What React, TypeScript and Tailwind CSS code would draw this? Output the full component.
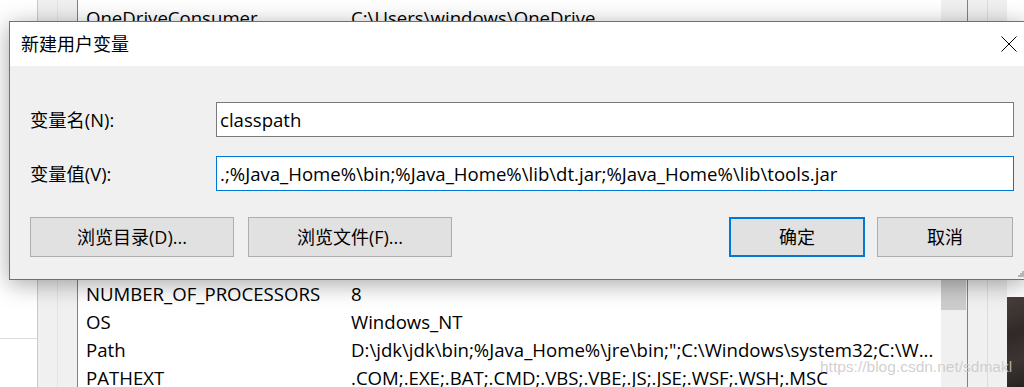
import React from 'react';

const ui = "font-['Open_Sans','Noto_Sans_CJK_SC',sans-serif]";

type Row = { name: string; value: string };

const topRows: Row[] = [{ name: 'OneDriveConsumer', value: 'C:\\Users\\windows\\OneDrive' }];

const bottomRows: Row[] = [
  { name: 'NUMBER_OF_PROCESSORS', value: '8' },
  { name: 'OS', value: 'Windows_NT' },
  {
    name: 'Path',
    value: 'D:\\jdk\\jdk\\bin;%Java_Home%\\jre\\bin;";C:\\Windows\\system32;C:\\W...',
  },
  { name: 'PATHEXT', value: '.COM;.EXE;.BAT;.CMD;.VBS;.VBE;.JS;.JSE;.WSF;.WSH;.MSC' },
];

const VarRow: React.FC<{ row: Row }> = ({ row }) => (
  <div className="flex h-[28px] items-center whitespace-nowrap text-[18.6px] text-black">
    <div className="w-[273px] shrink-0 pl-[8px]">{row.name}</div>
    <div>{row.value}</div>
  </div>
);

const Button: React.FC<{ label: string; width: string; primary?: boolean }> = ({
  label,
  width,
  primary,
}) => (
  <button
    className={
      primary
        ? `${width} h-[40px] border-2 border-[#0078d7] bg-[#e1e1e1] text-[18px] text-black`
        : `${width} h-[40px] border border-[#adadad] bg-[#e1e1e1] text-[18px] text-black`
    }
  >
    {label}
  </button>
);

export default function App() {
  return (
    <div className={`relative h-[387px] w-[1024px] overflow-hidden bg-white ${ui}`}>
      {/* background: environment variables window */}
      <div className="flex h-full">
        <div className="w-[37px] shrink-0 bg-white">
          <div className="h-[339px] border-b border-[#dcdcdc]" />
        </div>
        <div className="w-[20px] shrink-0 border-l border-[#c9c9c9] bg-[#f0f0f0]" />
        <div className="w-[20px] shrink-0 border-l border-[#e3e3e3] bg-[#f0f0f0]" />

        <div className="flex w-[891px] shrink-0 border-x border-[#828282] bg-white">
          <div className="flex-1 overflow-hidden pt-[4px]">
            {topRows.map((r) => (
              <VarRow key={r.name} row={r} />
            ))}
            <div className="h-[248px]" />
            {bottomRows.map((r) => (
              <VarRow key={r.name} row={r} />
            ))}
          </div>
          {/* scrollbar */}
          <div className="w-[26px] shrink-0 bg-[#f0f0f0]">
            <div className="mt-[250px] mr-[1px] h-[60px] bg-[#cdcdcd]" />
          </div>
        </div>

        <div className="w-[19px] shrink-0 bg-[#f0f0f0]" />
        <div className="w-[20px] shrink-0 border-l border-[#dcdcdc] bg-[#f0f0f0]" />
        <div className="flex flex-1 flex-col">
          <div className="h-[297px] bg-white" />
          <div className="flex-1 bg-[linear-gradient(160deg,#4a403c_0%,#2f2927_40%,#3d3532_70%,#262120_100%)]" />
        </div>
      </div>

      {/* watermark */}
      <div className="absolute left-[820px] top-[355px] font-['Liberation_Sans',sans-serif] text-[15.5px] whitespace-nowrap text-[rgba(200,200,200,0.85)]">
        https://blog.csdn.net/sdmakl
      </div>

      {/* dialog */}
      <div className="absolute left-[9px] top-[21px] flex h-[259px] w-[1017px] flex-col border border-[#707070] bg-[#f0f0f0] shadow-[0_4px_22px_rgba(0,0,0,0.35)]">
        <div className="flex h-[44px] shrink-0 items-center justify-between bg-white">
          <span className="pl-[11px] text-[18px] text-black">新建用户变量</span>
          <div className="flex h-full w-[32px] items-center justify-center">
            <svg width="16" height="16" viewBox="0 0 16 16">
              <path d="M0.5 0.5 L15.5 15.5 M15.5 0.5 L0.5 15.5" stroke="#000" strokeWidth="1" />
            </svg>
          </div>
        </div>

        <div className="relative flex-1 pl-[20px] pt-[36px]">
          <div className="flex h-[35px] items-center">
            <label className="w-[186px] shrink-0 text-[18.3px] text-black">变量名(N):</label>
            <div className="flex h-[35px] w-[798px] items-center border border-[#7a7a7a] bg-white pl-[3px] text-[18.6px] text-black">
              classpath
            </div>
          </div>
          <div className="mt-[19px] flex h-[35px] items-center">
            <label className="w-[186px] shrink-0 text-[18.3px] text-black">变量值(V):</label>
            <div className="flex h-[35px] w-[798px] items-center whitespace-nowrap border border-[#0078d7] bg-white pl-[3px] text-[18.6px] text-black">
              .;%Java_Home%\bin;%Java_Home%\lib\dt.jar;%Java_Home%\lib\tools.jar
            </div>
          </div>

          <div className="mt-[26px] flex w-[983px] justify-between">
            <div className="flex gap-[14px]">
              <Button label="浏览目录(D)..." width="w-[204px]" />
              <Button label="浏览文件(F)..." width="w-[204px]" />
            </div>
            <div className="flex gap-[12px]">
              <Button label="确定" width="w-[136px]" primary />
              <Button label="取消" width="w-[136px]" />
            </div>
          </div>

          {/* resize grip */}
          <svg className="absolute bottom-[2px] right-[1px]" width="6" height="6" viewBox="0 0 6 6">
            <rect x="4" y="0" width="2" height="2" fill="#b5b5b5" />
            <rect x="2" y="2" width="2" height="2" fill="#b5b5b5" />
            <rect x="4" y="2" width="2" height="2" fill="#b5b5b5" />
            <rect x="0" y="4" width="2" height="2" fill="#b5b5b5" />
            <rect x="2" y="4" width="2" height="2" fill="#b5b5b5" />
            <rect x="4" y="4" width="2" height="2" fill="#b5b5b5" />
          </svg>
        </div>
      </div>
    </div>
  );
}
